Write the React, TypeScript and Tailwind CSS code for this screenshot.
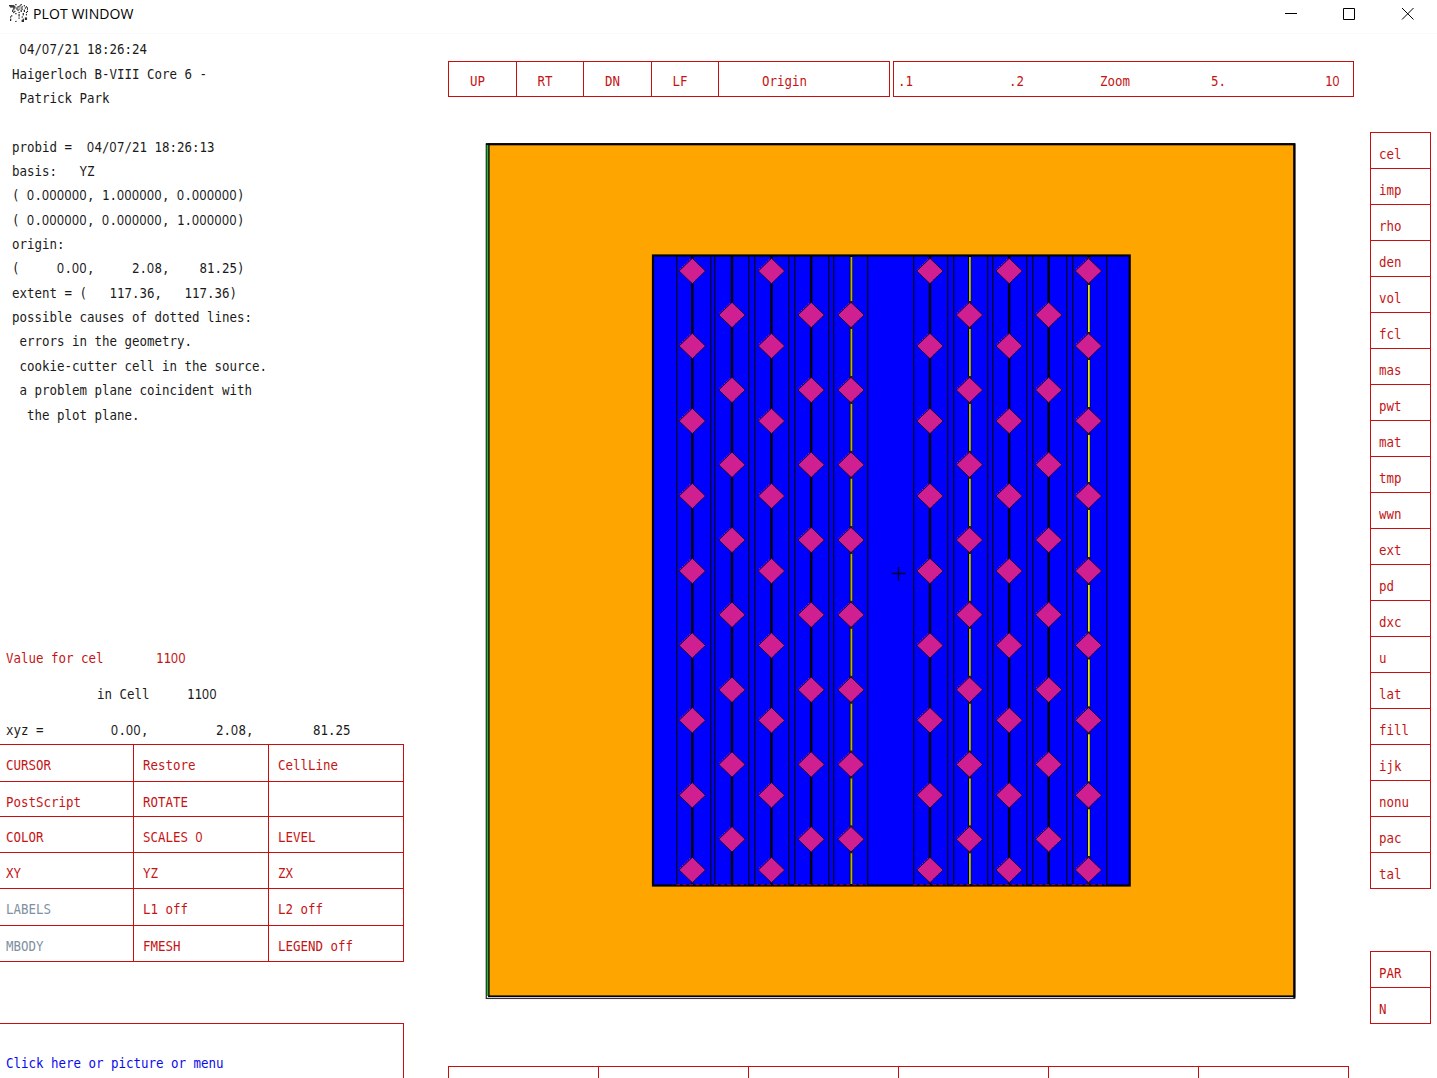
import React from "react";

const RED = "text-[#c41414]";

/* Monospaced label stretched to the tall, narrow X11 proportions. */
function T({ children, className = "" }: { children: string; className?: string }) {
  const parts = children.split(/(0+)/);
  return (
    <span
      className={
        "inline-block h-[18px] origin-center scale-y-[1.17] whitespace-pre font-['DejaVu_Sans_Mono',monospace] text-[12.46px] leading-[16px] " +
        className
      }
    >
      {parts.map((p, i) =>
        p.startsWith("0") ? (
          <span key={i} className="font-['Liberation_Sans',sans-serif] leading-[0] tracking-[0.57px]">
            {p}
          </span>
        ) : (
          p
        ),
      )}
    </span>
  );
}

const info = [
  " 04/07/21 18:26:24",
  "Haigerloch B-VIII Core 6 -",
  " Patrick Park",
  "",
  "probid =  04/07/21 18:26:13",
  "basis:   YZ",
  "( 0.000000, 1.000000, 0.000000)",
  "( 0.000000, 0.000000, 1.000000)",
  "origin:",
  "(     0.00,     2.08,    81.25)",
  "extent = (   117.36,   117.36)",
  "possible causes of dotted lines:",
  " errors in the geometry.",
  " cookie-cutter cell in the source.",
  " a problem plane coincident with",
  "  the plot plane.",
];

const menu: { h: string; cells: string[]; dim?: boolean }[] = [
  { h: "h-[37px]", cells: ["CURSOR", "Restore", "CellLine"] },
  { h: "h-[35px]", cells: ["PostScript", "ROTATE", ""] },
  { h: "h-[36px]", cells: ["COLOR", "SCALES 0", "LEVEL"] },
  { h: "h-[36px]", cells: ["XY", "YZ", "ZX"] },
  { h: "h-[37px]", cells: ["LABELS", "L1 off", "L2 off"], dim: true },
  { h: "h-[36px]", cells: ["MBODY", "FMESH", "LEGEND off"], dim: true },
];

const side = "cel imp rho den vol fcl mas pwt mat tmp wwn ext pd dxc u lat fill ijk nonu pac tal".split(" ");

const rowsA = [271, 346, 421, 496, 571, 645.5, 720.3, 795.3, 870];
const rowsB = [315, 390, 464.8, 540, 614.8, 689.8, 764.5, 839.3];
const columns = [
  { x: 692.3, rows: rowsA },
  { x: 732, rows: rowsB },
  { x: 771.5, rows: rowsA },
  { x: 811.2, rows: rowsB },
  { x: 851, rows: rowsB, wire: "#b8b800" },
  { x: 930, rows: rowsA },
  { x: 969.5, rows: rowsB, wire: "#c0c000" },
  { x: 1009.2, rows: rowsA },
  { x: 1048.7, rows: rowsB },
  { x: 1088.5, rows: rowsA, wire: "#e6e600" },
];
const walls = [
  [676, 710], [714, 748], [754, 788], [794, 828], [833, 867],
  [913, 947], [953, 987], [992, 1026], [1032, 1066], [1072, 1106],
];

function Plot() {
  return (
    <svg width="812" height="860" viewBox="485 142 812 860" className="block">
      <rect x="486.3" y="144" width="808.4" height="854.4" fill="#fff" stroke="#333" strokeWidth="1.3" />
      <rect x="488.8" y="144.3" width="805.6" height="851.9" fill="#ffa500" stroke="#000" strokeWidth="1.6" />
      <path d="M486 144.3H1295.3M1294.3 143.3V998" stroke="#000" strokeWidth="2" fill="none" />
      <rect x="487" y="145" width="1.3" height="851" fill="#10c828" />
      <rect x="653" y="255.5" width="476.7" height="630" fill="#00f" stroke="#000" strokeWidth="2.2" />
      {walls.flat().map((x) => (
        <rect key={x} x={x} y="256" width="1.35" height="629" fill="#000030" />
      ))}
      {columns.map((c) => (
        <g key={c.x}>
          <rect x={c.x - 1.3} y="256" width={c.wire ? 3 : 2.5} height="629" fill="#000010" />
          {c.wire && <rect x={c.x - 0.5} y="257" width="1.8" height="627" fill={c.wire} />}
          {c.rows.map((y) => (
            <g key={y}>
              {c.wire && <rect x={c.x - 1.3} y={y - 14} width="3" height="28" fill="#222200" />}
              <path
                d={`M${c.x - 13.2} ${y}L${c.x} ${y - 12.7}L${c.x + 13.2} ${y}L${c.x} ${y + 12.7}Z`}
                fill="#d01f90"
                stroke="#1a0038"
                strokeWidth="1"
              />
              <path
                d={`M${c.x - 12.6} ${y - 1.8}L${c.x - 1} ${y - 12.8}`}
                stroke="#b018a0"
                strokeWidth="1"
                strokeDasharray="1.4 1.8"
              />
              <path
                d={`M${c.x + 3} ${y + 9.4}L${c.x + 10} ${y + 2.6}`}
                stroke="#2800d8"
                strokeWidth="1"
                strokeDasharray="1.6 2"
              />
            </g>
          ))}
        </g>
      ))}
      {walls.map(([a, b]) => (
        <path key={a} d={`M${a} 884.6H${b}`} stroke="#7c0048" strokeWidth="1.4" strokeDasharray="4 2.5" />
      ))}
      <path d="M892 573.5H905.5M898.5 567V580.5" stroke="#000028" strokeWidth="1.3" />
    </svg>
  );
}

const noise = [
  "......1....1......",
  "11111.....1...1...",
  ".11111..11..1...1.",
  "....11.1...1...1.1",
  "....1..1.1..1....1",
  "...1....1..1..1...",
  "...1.1.....1..1..1",
  "....1....1......1.",
  "......1......1....",
  ".........1...1..1.",
  "..1......1........",
  ".1..........1.....",
  ".........1.....11.",
  ".1...........1.11.",
  ".1..........11....",
  "......1.....11....",
];

function AppIcon() {
  return (
    <svg width="19" height="18" viewBox="0 0 18 16" preserveAspectRatio="none">
      {noise.flatMap((row, y) =>
        [...row].map((c, x) => (c === "1" ? <rect key={`${x}-${y}`} x={x} y={y} width="1.1" height="1.1" fill="#111" /> : null)),
      )}
    </svg>
  );
}

function SideItem({ label }: { label: string }) {
  return (
    <div className={"h-[36px] border-b border-[#c80f0f] pl-[8px] pt-[13px] leading-[18px] " + RED}>
      <T className="align-top">{label}</T>
    </div>
  );
}

export default function App() {
  return (
    <div className="flex h-[1078px] w-[1437px] flex-col overflow-hidden bg-white text-[#1a1a1a]">
      <header className="flex h-[34px] shrink-0 items-start border-b border-[#fafafa] pl-[9px]">
        <div className="pt-[4px]">
          <AppIcon />
        </div>
        <div className="ml-[5px] pt-[3px] font-['Open_Sans',sans-serif] text-[14px] leading-[22px] tracking-[0.12px] text-black">
          PLOT WINDOW
        </div>
        <svg className="ml-auto mr-[22px] mt-[7px]" width="130" height="14" viewBox="1285 7 130 14" fill="none" stroke="#000" strokeWidth="1">
          <path d="M1285 13.5H1297" />
          <path d="M1343.5 8.5H1354.5V19.5H1343.5Z" />
          <path d="M1402 8L1413.5 19.5M1413.5 8L1402 19.5" />
        </svg>
      </header>

      <main className="flex min-h-0 flex-1">
        <aside className="flex w-[448px] shrink-0 flex-col">
          <div className="flex h-[615px] shrink-0 flex-col pl-[12px] pt-[4px]">
            {info.map((line, i) => (
              <div key={i} className="flex h-[24.37px] shrink-0 items-center">
                <T>{line}</T>
              </div>
            ))}
          </div>
          <div className="flex h-[95px] shrink-0 flex-col pl-[6px] pt-px">
            <div className={"h-[36px] leading-[18px] " + RED}>
              <T className="align-top">{"Value for cel       1100"}</T>
            </div>
            <div className="h-[36px] pl-[91px] leading-[18px]">
              <T className="align-top">{"in Cell     1100"}</T>
            </div>
            <div className="flex h-[22px] leading-[18px]">
              <T className="w-[105px]">xyz =</T>
              <T className="w-[105px]">0.00,</T>
              <T className="w-[97px]">2.08,</T>
              <T>81.25</T>
            </div>
          </div>
          <div className="w-[404px] shrink-0 border-r border-t border-[#c80f0f]">
            {menu.map((row) => (
              <div key={row.cells[0]} className={"flex border-b border-[#c80f0f] " + row.h + " " + RED}>
                <div className={"w-[134px] border-r border-[#c80f0f] pl-[6px] pt-[12px] leading-[18px] " + (row.dim ? "text-[#8090a0]" : "")}>
                  <T className="align-top">{row.cells[0]}</T>
                </div>
                <div className="w-[135px] border-r border-[#c80f0f] pl-[9px] pt-[12px] leading-[18px]">
                  <T className="align-top">{row.cells[1]}</T>
                </div>
                <div className="pl-[9px] pt-[12px] leading-[18px]">
                  <T className="align-top">{row.cells[2]}</T>
                </div>
              </div>
            ))}
          </div>
          <div className="mt-[61px] h-[55px] w-[404px] shrink-0 border-r border-t border-[#c80f0f] pl-[6px] pt-[31px] leading-[18px] text-[#0a0aee]">
            <T className="align-top">Click here or picture or menu</T>
          </div>
        </aside>

        <section className="flex w-[922px] shrink-0 flex-col pt-[27px]">
          <nav className={"flex h-[36px] shrink-0 gap-[3px] leading-[18px] " + RED}>
            <div className="flex w-[442px] border border-[#c80f0f]">
              {["UP", "RT", "DN", "LF"].map((d) => (
                <div key={d} className="w-[67.5px] border-r border-[#c80f0f] pl-[21px] pt-[11px]">
                  <T className="align-top">{d}</T>
                </div>
              ))}
              <div className="pl-[43px] pt-[11px]">
                <T className="align-top">Origin</T>
              </div>
            </div>
            <div className="flex w-[461px] border border-[#c80f0f] pl-[4px] pt-[11px]">
              <T className="w-[111px]">.1</T>
              <T className="w-[91px]">.2</T>
              <T className="w-[111px]">Zoom</T>
              <T className="w-[114px]">5.</T>
              <T>10</T>
            </div>
          </nav>
          <div className="mt-[45px] h-[860px] shrink-0 pl-[37px]">
            <Plot />
          </div>
          <div className="mt-[64px] flex h-[12px] w-[901px] shrink-0 border-l border-t border-[#c80f0f]">
            {[0, 1, 2, 3, 4, 5].map((n) => (
              <div key={n} className="w-[150px] border-r border-[#c80f0f]" />
            ))}
          </div>
        </section>

        <aside className="w-[61px] shrink-0 pt-[98px]">
          <div className="border-x border-t border-[#c80f0f]">
            {side.map((s) => (
              <SideItem key={s} label={s} />
            ))}
          </div>
          <div className="mt-[62px] border-x border-t border-[#c80f0f]">
            <SideItem label="PAR" />
            <SideItem label="N" />
          </div>
        </aside>
      </main>
    </div>
  );
}
